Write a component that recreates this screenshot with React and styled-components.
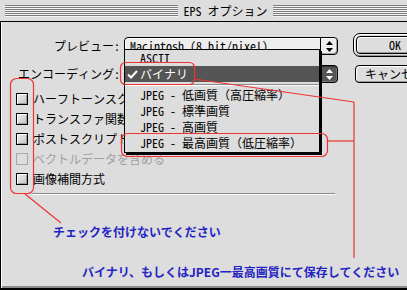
import React from "react";
import styled, { createGlobalStyle } from "styled-components";

const UI_FONT = `"Noto Sans Mono CJK JP", "Noto Sans CJK JP", "DejaVu Sans Mono", monospace`;
const NOTE_FONT = `"Noto Sans CJK JP", "Noto Sans", sans-serif`;

const GlobalStyle = createGlobalStyle`
  html, body { margin: 0; padding: 0; background: #dddddd; }
  body { font-family: ${UI_FONT}; }
  * { box-sizing: border-box; }
`;

const Window = styled.div`
  position: relative;
  width: 407px;
  height: 290px;
  overflow: hidden;
  background: #dddddd;
  display: flex;
  flex-direction: column;
  font-family: ${UI_FONT};
  font-size: 12px;
  color: #000;
`;

const TitleBar = styled.div`
  flex: 0 0 22px;
  border-bottom: 1px solid #000;
  display: flex;
  align-items: flex-start;
  padding: 5px 0 0 5px;
`;

const Stripes = styled.div`
  height: 12px;
  flex: ${(p) => (p.$w ? `0 0 ${p.$w}px` : "1 1 auto")};
  background: repeating-linear-gradient(
    to bottom,
    #7c7c7c 0 1px,
    #f4f4f4 1px 2px
  );
`;

const TitleText = styled.div`
  flex: 0 0 95px;
  text-align: center;
  line-height: 12px;
  font-size: 12px;
  white-space: nowrap;
`;

const Frame = styled.div`
  flex: 1 1 auto;
  position: relative;
  border-left: 1px solid #000;
  border-bottom: 2px solid #000;
  box-shadow: inset 1px 0 0 #fff, inset 0 -2px 0 #8a8a8a;
  display: flex;
  flex-direction: column;
`;

const Top = styled.div`
  display: flex;
  padding-top: 11px;
`;

const FormArea = styled.div`
  flex: 0 0 352px;
  display: flex;
  flex-direction: column;
`;

const FieldGrid = styled.div`
  margin-top: 4px;
  display: grid;
  grid-template-columns: 119px 214px;
  grid-auto-rows: 18px;
  column-gap: 4px;
  row-gap: 10px;
`;

const FieldLabel = styled.div`
  text-align: right;
  line-height: 18px;
  white-space: nowrap;
`;

const Popup = styled.div`
  position: relative;
  height: 18px;
  border: 1px solid #000;
  border-radius: 4px;
  background: ${(p) => (p.$pressed ? "#555555" : "#eeeeee")};
  color: ${(p) => (p.$pressed ? "#fff" : "#000")};
  display: flex;
  box-shadow: ${(p) =>
    p.$pressed
      ? "inset 1px 1px 0 #333, inset -1px -1px 0 #777"
      : "inset 1px 1px 0 #fff, inset -1px -1px 0 #a0a0a0"};
`;

const PopupText = styled.div`
  flex: 1 1 auto;
  padding-left: 5px;
  line-height: 16px;
  white-space: nowrap;
  overflow: hidden;
`;

const PopupArrow = styled.div`
  flex: 0 0 17px;
  border-left: 1px solid #000;
  display: flex;
  align-items: center;
  justify-content: center;
`;

const Menu = styled.div`
  position: absolute;
  left: -1px;
  top: -17px;
  width: 196px;
  border: 1px solid #000;
  box-shadow: 2px 2px 0 #000;
  background: #dddddd;
  color: #000;
  padding-bottom: 1px;
  z-index: 3;
`;

const MenuItem = styled.div`
  position: relative;
  height: 16px;
  line-height: 16px;
  padding-left: 15px;
  white-space: nowrap;
  background: ${(p) => (p.$selected ? "#555555" : "transparent")};
  color: ${(p) => (p.$selected ? "#fff" : "#000")};
`;

const CheckMark = styled.svg`
  position: absolute;
  left: 2px;
  top: 4px;
`;

const MenuSeparator = styled.div`
  height: 5px;
  background: linear-gradient(
    to bottom,
    transparent 0 2px,
    #8a8a8a 2px 3px,
    #ffffff 3px 4px,
    transparent 4px
  );
`;

const CheckList = styled.div`
  margin-top: 10px;
  padding-left: 15px;
  display: flex;
  flex-direction: column;
  gap: 8px;
`;

const CheckRow = styled.div`
  display: flex;
  align-items: center;
  height: 12px;
  gap: 5px;
  white-space: nowrap;
  color: ${(p) => (p.$disabled ? "#a0a0a0" : "#000")};
  line-height: 12px;
`;

const Checkbox = styled.span`
  flex: 0 0 12px;
  width: 12px;
  height: 12px;
  border: 1px solid ${(p) => (p.$disabled ? "#a8a8a8" : "#000")};
  background: ${(p) =>
    p.$disabled ? "#dddddd" : "linear-gradient(135deg, #eeeeee, #c4c4c4)"};
  box-shadow: ${(p) =>
    p.$disabled ? "none" : "inset 1px 1px 0 #fff, inset -1px -1px 0 #999"};
`;

const Separator = styled.div`
  margin-top: 8px;
  margin-left: 31px;
  width: 303px;
  border-top: 1px solid #8a8a8a;
  border-bottom: 1px solid #ffffff;
`;

const ButtonColumn = styled.div`
  display: flex;
  flex-direction: column;
  align-items: flex-start;
  gap: 8px;
`;

const DefaultRing = styled.div`
  border: 1px solid #000;
  border-radius: 7px;
  padding: 2px;
  background: #dddddd;
  box-shadow: inset 1px 1px 0 #fff, inset -1px -1px 0 #999;
`;

const Button = styled.div`
  width: ${(p) => p.$w}px;
  height: 18px;
  margin-left: ${(p) => p.$ml || 0}px;
  border: 1px solid #000;
  border-radius: 4px;
  background: #dddddd;
  box-shadow: inset 1px 1px 0 #fff, inset -1px -1px 0 #999;
  text-align: center;
  line-height: 16px;
  white-space: nowrap;
`;

const Note = styled.div`
  font-family: ${NOTE_FONT};
  font-weight: 700;
  font-size: 12px;
  line-height: 16px;
  color: #2424c4;
  white-space: nowrap;
  margin-top: ${(p) => p.$mt}px;
  padding-left: ${(p) => p.$pl}px;
`;

const Overlay = styled.svg`
  position: absolute;
  left: 0;
  top: 0;
  pointer-events: none;
  z-index: 10;
`;

const UpDown = ({ color }) => (
  <svg width="7" height="11" viewBox="0 0 7 11">
    <polygon points="3.5,0 7,4 0,4" fill={color} />
    <polygon points="0,7 7,7 3.5,11" fill={color} />
  </svg>
);

export default function App() {
  const red = "#ee3333";
  return (
    <>
      <GlobalStyle />
      <Window>
        <TitleBar>
          <Stripes $w={173} />
          <TitleText>EPS オプション</TitleText>
          <Stripes />
        </TitleBar>
        <Frame>
          <Top>
            <FormArea>
              <FieldGrid>
                <FieldLabel>プレビュー:</FieldLabel>
                <Popup>
                  <PopupText>Macintosh (8 bit/pixel)</PopupText>
                  <PopupArrow>
                    <UpDown color="#000" />
                  </PopupArrow>
                </Popup>
                <FieldLabel>エンコーディング:</FieldLabel>
                <Popup $pressed>
                  <PopupText>バイナリ</PopupText>
                  <PopupArrow>
                    <UpDown color="#fff" />
                  </PopupArrow>
                  <Menu>
                    <MenuItem>ASCII</MenuItem>
                    <MenuItem $selected>
                      <CheckMark width="11" height="9" viewBox="0 0 11 9">
                        <path
                          d="M1 4.5 L4 7.5 L10 1"
                          fill="none"
                          stroke="#fff"
                          strokeWidth="2"
                        />
                      </CheckMark>
                      バイナリ
                    </MenuItem>
                    <MenuSeparator />
                    <MenuItem>JPEG - 低画質（高圧縮率）</MenuItem>
                    <MenuItem>JPEG - 標準画質</MenuItem>
                    <MenuItem>JPEG - 高画質</MenuItem>
                    <MenuItem>JPEG - 最高画質（低圧縮率）</MenuItem>
                  </Menu>
                </Popup>
              </FieldGrid>
              <CheckList>
                <CheckRow>
                  <Checkbox />
                  ハーフトーンスクリーンを含める
                </CheckRow>
                <CheckRow>
                  <Checkbox />
                  トランスファ関数を含める
                </CheckRow>
                <CheckRow>
                  <Checkbox />
                  ポストスクリプトカラーマネージメント
                </CheckRow>
                <CheckRow $disabled>
                  <Checkbox $disabled />
                  ベクトルデータを含める
                </CheckRow>
                <CheckRow>
                  <Checkbox />
                  画像補間方式
                </CheckRow>
              </CheckList>
              <Separator />
            </FormArea>
            <ButtonColumn>
              <DefaultRing>
                <Button $w={78}>OK</Button>
              </DefaultRing>
              <Button $w={80} $ml={2}>
                キャンセル
              </Button>
            </ButtonColumn>
          </Top>
          <Note $mt={29} $pl={52}>
            チェックを付けないでください
          </Note>
          <Note $mt={24} $pl={81}>
            バイナリ、もしくはJPEG一最高画質にて保存してください
          </Note>
        </Frame>
        <Overlay width="407" height="290" viewBox="0 0 407 290">
          <g fill="none" stroke={red} strokeWidth="1.2">
            <rect x="10.5" y="78.5" width="23" height="115" rx="6" />
            <line x1="25" y1="194" x2="61" y2="223" />
            <rect x="120.5" y="62.5" width="74" height="22" rx="5" />
            <line x1="194" y1="79" x2="354" y2="102" />
            <line x1="354" y1="102" x2="354" y2="258" />
            <rect x="121.5" y="133.5" width="206" height="23" rx="6" />
            <line x1="327" y1="141" x2="354" y2="141" />
          </g>
        </Overlay>
      </Window>
    </>
  );
}
